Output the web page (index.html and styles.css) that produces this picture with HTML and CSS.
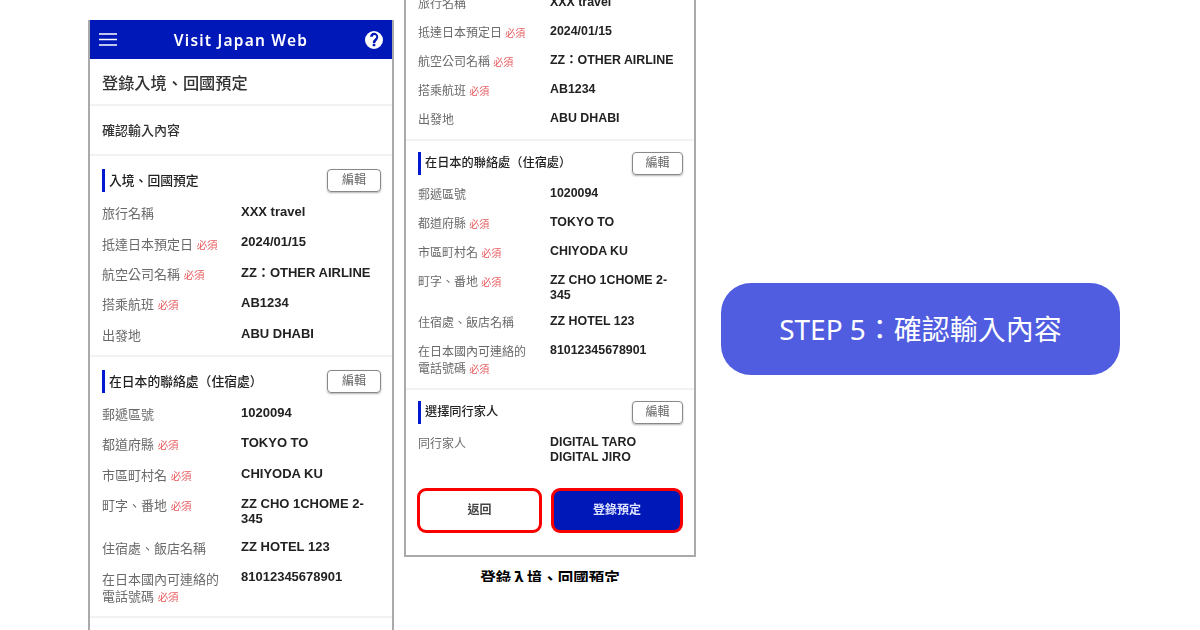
FILE: index.html
```html
<!DOCTYPE html>
<html lang="zh-TW">
<head>
    <meta charset="UTF-8">
    <title>Visit Japan Web</title>
    <link rel="stylesheet" href="styles.css">
</head>
<body>
<div class="stage">
    <div class="phone phone-left">
        <header class="app-bar">
            <svg class="menu-icon" width="18" height="13" viewBox="0 0 18 13"><path d="M0 1h18M0 6.500h18M0 12h18" stroke="#fff" stroke-width="1.500"/></svg>
            <span class="app-title">Visit Japan Web</span>
            <svg class="help-icon" width="18" height="18" viewBox="0 0 24 24"><path fill="#fff" fill-rule="evenodd" d="M12 0a12 12 0 1 0 0 24 12 12 0 0 0 0-24zm1.700 20.300h-3.400v-3.300h3.400zm3.300-8.800l-1.300 1.300c-1 1-1.800 1.900-1.800 3.200h-3.400v-.8c0-1.500.7-2.800 1.800-3.900l1.900-1.900c.5-.5.8-1.100.8-1.800 0-1.200-1-2.200-2.300-2.200s-2.300 1-2.300 2.200H6.800c0-3 2.300-5.300 5.200-5.300s5.600 2.300 5.600 5.300c0 1.600-.6 2.900-1.600 3.900z"/></svg>
        </header>
        <div class="page-title">登錄入境、回國預定</div>
        <div class="page-sub">確認輸入內容</div>
        <section class="block">
            <div class="block-head"><h2>入境、回國預定</h2><span class="edit-btn">編輯</span></div>
            <div class="row"><div class="label">旅行名稱</div><div class="value">XXX travel</div></div>
            <div class="row"><div class="label">抵達日本預定日 <em>必須</em></div><div class="value">2024/01/15</div></div>
            <div class="row"><div class="label">航空公司名稱 <em>必須</em></div><div class="value">ZZ：OTHER AIRLINE</div></div>
            <div class="row"><div class="label">搭乘航班 <em>必須</em></div><div class="value">AB1234</div></div>
            <div class="row"><div class="label">出發地</div><div class="value">ABU DHABI</div></div>
        </section>
        <section class="block">
            <div class="block-head"><h2>在日本的聯絡處（住宿處）</h2><span class="edit-btn">編輯</span></div>
            <div class="row"><div class="label">郵遞區號</div><div class="value">1020094</div></div>
            <div class="row"><div class="label">都道府縣 <em>必須</em></div><div class="value">TOKYO TO</div></div>
            <div class="row"><div class="label">市區町村名 <em>必須</em></div><div class="value">CHIYODA KU</div></div>
            <div class="row"><div class="label">町字、番地 <em>必須</em></div><div class="value">ZZ CHO 1CHOME 2-345</div></div>
            <div class="row"><div class="label">住宿處、飯店名稱</div><div class="value">ZZ HOTEL 123</div></div>
            <div class="row"><div class="label">在日本國內可連絡的<br>電話號碼 <em>必須</em></div><div class="value">81012345678901</div></div>
        </section>
        <section class="block"></section>
    </div>

    <div class="phone-wrap">
        <div class="phone phone-right">
            <section class="block">
                <div class="row"><div class="label">旅行名稱</div><div class="value">XXX travel</div></div>
                <div class="row"><div class="label">抵達日本預定日 <em>必須</em></div><div class="value">2024/01/15</div></div>
                <div class="row"><div class="label">航空公司名稱 <em>必須</em></div><div class="value">ZZ：OTHER AIRLINE</div></div>
                <div class="row"><div class="label">搭乘航班 <em>必須</em></div><div class="value">AB1234</div></div>
                <div class="row"><div class="label">出發地</div><div class="value">ABU DHABI</div></div>
            </section>
            <section class="block">
                <div class="block-head"><h2>在日本的聯絡處（住宿處）</h2><span class="edit-btn">編輯</span></div>
                <div class="row"><div class="label">郵遞區號</div><div class="value">1020094</div></div>
                <div class="row"><div class="label">都道府縣 <em>必須</em></div><div class="value">TOKYO TO</div></div>
                <div class="row"><div class="label">市區町村名 <em>必須</em></div><div class="value">CHIYODA KU</div></div>
                <div class="row"><div class="label">町字、番地 <em>必須</em></div><div class="value">ZZ CHO 1CHOME 2-345</div></div>
                <div class="row"><div class="label">住宿處、飯店名稱</div><div class="value">ZZ HOTEL 123</div></div>
                <div class="row"><div class="label">在日本國內可連絡的<br>電話號碼 <em>必須</em></div><div class="value">81012345678901</div></div>
            </section>
            <section class="block block-last">
                <div class="block-head"><h2>選擇同行家人</h2><span class="edit-btn">編輯</span></div>
                <div class="row"><div class="label">同行家人</div><div class="value">DIGITAL TARO<br>DIGITAL JIRO</div></div>
                <div class="actions">
                    <span class="action action-back">返回</span>
                    <span class="action action-submit">登錄預定</span>
                </div>
            </section>
        </div>
        <div class="caption"><span>登錄入境、回國預定</span></div>
    </div>

    <div class="step-pill">STEP 5：確認輸入內容</div>
</div>
</body>
</html>
```

FILE: styles.css
```css
* {
    box-sizing: border-box;
}
body {
    margin: 0;
    background: #fff;
    font-family: "Liberation Sans", "Noto Sans CJK TC", sans-serif;
}
.stage {
    display: flex;
    height: 630px;
    padding-left: 88px;
    overflow: hidden;
}
.phone {
    background: #fff;
    border: 2px solid #aaa;
    filter: blur(0.35px);
}
.phone-left {
    flex: none;
    width: 306px;
    height: 640px;
    margin-top: 20px;
    border-top: none;
    border-bottom: none;
}
.phone-wrap {
    flex: none;
    width: 292px;
    height: 582px;
    margin-left: 10px;
    display: flex;
    flex-direction: column;
    justify-content: flex-end;
}
.phone-right {
    flex: none;
}
.app-bar {
    height: 39px;
    background: #0018b8;
    display: flex;
    align-items: center;
    justify-content: space-between;
    padding: 0 9px;
}
.app-title {
    color: #fff;
    font-family: "Noto Sans", sans-serif;
    font-size: 15.500px;
    line-height: 20px;
    font-weight: 600;
    letter-spacing: 1.2px;
}
.page-title {
    height: 47px;
    padding: 0 12px;
    display: flex;
    align-items: center;
    border-bottom: 2px solid #f2f2f2;
    font-size: 16.200px;
    font-weight: 500;
    color: #333;
}
.page-sub {
    height: 50px;
    padding: 0 12px 2px;
    display: flex;
    align-items: center;
    border-bottom: 2px solid #f2f2f2;
    font-size: 13px;
    font-weight: 500;
    color: #333;
}
.block {
    padding: 13px 11px 4.5px 12px;
    border-bottom: 2px solid #f2f2f2;
}
.block:last-child {
    border-bottom: none;
}
.block-head {
    display: flex;
    align-items: center;
    justify-content: space-between;
    height: 23px;
    margin-bottom: 6.5px;
}
.block-head h2 {
    margin: 0;
    padding-left: 4px;
    border-left: 3px solid #0018d0;
    font-size: 12.800px;
    line-height: 23px;
    font-weight: 500;
    color: #222;
    text-spacing-trim: space-all;
}
.edit-btn {
    width: 54px;
    height: 23px;
    line-height: 21px;
    text-align: center;
    border: 1px solid #888;
    border-radius: 4px;
    box-shadow: 0 1px 2px rgba(0, 0, 0, 0.3);
    font-size: 12px;
    color: #666;
}
.row {
    display: grid;
    grid-template-columns: 139px 1fr;
}
.label {
    padding: 6.7px 0;
    font-size: 13px;
    line-height: 17px;
    color: #6a6a6a;
}
.label em {
    font-style: normal;
    font-size: 10.500px;
    line-height: 1;
    color: #e8585c;
}
.value {
    padding: 5.5px 0 7.5px;
    font-size: 13px;
    line-height: 15px;
    font-weight: 700;
    color: #222;
}
.phone-right .block {
    padding-top: 11.5px;
    padding-bottom: 3.5px;
}
.phone-right .block-head {
    margin-bottom: 6px;
}
.phone-right .block-head h2 {
    font-size: 12.200px;
}
.phone-right .row {
    grid-template-columns: 132px 1fr;
}
.phone-right .label {
    padding: 6px 0;
    font-size: 12px;
    line-height: 17px;
}
.phone-right .label em {
    font-size: 10px;
}
.phone-right .value {
    padding: 5px 0 7px;
    font-size: 12.400px;
    line-height: 14.500px;
}
.phone-right .edit-btn {
    width: 51px;
}
.phone-right .block-last {
    padding-bottom: 22px;
}
.actions {
    display: flex;
    gap: 9px;
    margin: 17px 0 0 -1px;
}
.action {
    flex: 1;
    height: 45px;
    line-height: 39px;
    text-align: center;
    border: 3px solid #f80000;
    border-radius: 9px;
    font-size: 12px;
    font-weight: 700;
}
.action-back {
    color: #444;
}
.action-submit {
    flex: 1.056;
    background: #0018b8;
    color: #dfe3ff;
}
.caption {
    flex: none;
    height: 25px;
    overflow: hidden;
    text-align: center;
    padding-top: 13px;
    font-size: 15.500px;
    line-height: 18px;
    font-weight: 700;
    color: #000;
}
.step-pill {
    flex: none;
    width: 399px;
    height: 92px;
    margin: 283px 0 0 25px;
    padding-bottom: 2px;
    border-radius: 30px;
    background: #505de0;
    color: #fff;
    display: flex;
    align-items: center;
    justify-content: center;
    font-family: "Noto Sans", "Noto Sans CJK TC", sans-serif;
    font-size: 28px;
}
```
